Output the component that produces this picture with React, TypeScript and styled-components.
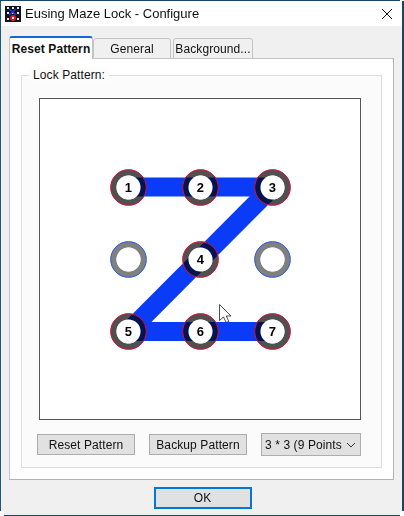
import React from 'react';
import styled, { createGlobalStyle } from 'styled-components';

const COORDS = [88.5, 160.5, 232.5];

// grid position -> number on the pattern
const ORDER: Record<number, number> = { 0: 1, 1: 2, 2: 3, 4: 4, 6: 5, 7: 6, 8: 7 };

const SEGMENTS = [
  [88.5, 187 - 99, 232.5, 187 - 99],
  [232.5, 88, 88.5, 232.5],
  [88.5, 232.5, 232.5, 232.5],
];

const PatternBoard = () => (
  <svg width="320" height="320" viewBox="0 0 320 320">
    {SEGMENTS.map(([x1, y1, x2, y2], i) => (
      <line key={i} x1={x1} y1={y1} x2={x2} y2={y2} stroke="#0a3cf8" strokeWidth="19" />
    ))}
    {COORDS.map((cy, row) =>
      COORDS.map((cx, col) => {
        const num = ORDER[row * 3 + col];
        return (
          <g key={`${row}-${col}`}>
            <circle
              cx={cx}
              cy={cy}
              r="15"
              fill="none"
              stroke={num ? '#505050' : '#808080'}
              strokeWidth="6"
              style={{ mixBlendMode: 'multiply' }}
            />
            <circle cx={cx} cy={cy} r="17.8" fill="none" stroke={num ? '#e0103a' : '#2f5cf0'} strokeWidth="1" />
            <circle cx={cx} cy={cy} r="12" fill="#fff" />
            {num ? (
              <text x={cx} y={cy + 4.5} textAnchor="middle" fontSize="13" fontWeight="700" fill="#000">
                {num}
              </text>
            ) : null}
          </g>
        );
      }),
    )}
    <path
      d="M179.5 205.5V221.5L183.5 218L186.2 223.5L188.8 222.4L186.2 217H191Z"
      fill="#fff"
      stroke="#222"
      strokeWidth="0.8"
    />
  </svg>
);

const AppIcon = () => (
  <svg width="16" height="16" viewBox="0 0 16 16">
    <rect width="16" height="16" fill="#14141c" />
    {[2, 7, 12].map((x) =>
      [1, 6].map((y) => <rect key={`${x}-${y}`} x={x} y={y} width="2" height="2" fill="#e8e8e8" />),
    )}
    <path d="M4 3l7 6M11 3L4 9" stroke="#2233dd" strokeWidth="1.6" />
    <rect x="2" y="12" width="2" height="2" fill="#e8e8e8" />
    <rect x="12" y="12" width="2" height="2" fill="#e8e8e8" />
    <circle cx="8" cy="12" r="3" fill="#e01828" />
    <rect x="7" y="11" width="2" height="2" fill="#fff" />
  </svg>
);

export default function App() {
  return (
    <>
      <GlobalStyle />
      <Window>
        <TitleBar>
          <AppIcon />
          <Title>Eusing Maze Lock - Configure</Title>
          <svg width="12" height="12" viewBox="0 0 12 12">
            <path d="M1 1l10 10M11 1L1 11" stroke="#111" strokeWidth="1" fill="none" />
          </svg>
        </TitleBar>
        <Body>
          <TabRow>
            <Tab $active $width={84}>
              Reset Pattern
            </Tab>
            <Tab $width={78}>General</Tab>
            <Tab $width={80} $gap={2}>
              Background...
            </Tab>
          </TabRow>
          <Panel>
            <GroupBox>
              <Legend>Lock Pattern:</Legend>
              <Board>
                <PatternBoard />
              </Board>
              <Controls>
                <PlainButton>Reset Pattern</PlainButton>
                <PlainButton>Backup Pattern</PlainButton>
                <SelectBox>
                  <span>3 * 3 (9 Points</span>
                  <svg width="10" height="6" viewBox="0 0 10 6">
                    <path d="M1 1l4 4 4-4" stroke="#333" strokeWidth="1" fill="none" />
                  </svg>
                </SelectBox>
              </Controls>
            </GroupBox>
          </Panel>
          <Footer>
            <OkButton>OK</OkButton>
          </Footer>
        </Body>
      </Window>
    </>
  );
}

const GlobalStyle = createGlobalStyle`
  html, body {
    margin: 0;
    padding: 0;
    background: #fff;
  }
  body {
    font-family: "Liberation Sans", Arial, sans-serif;
    font-size: 12px;
    letter-spacing: 0.1px;
    color: #111;
  }
`;

const Window = styled.div`
  position: relative;
  width: 404px;
  height: 516px;
  box-sizing: border-box;
  border-style: solid;
  border-color: #1c4468;
  border-width: 1px 2px 1px 1px;
  border-left-color: #1c5a7a;
  display: flex;
  flex-direction: column;
  overflow: hidden;

  /* the screenshot's rounded-off window corners */
  &::after {
    content: '';
    position: fixed;
    left: 0;
    top: 0;
    width: 404px;
    height: 516px;
    pointer-events: none;
    background:
      linear-gradient(#fff, #fff) right top / 4px 1px no-repeat,
      linear-gradient(#fff, #fff) left bottom / 4px 5px no-repeat,
      linear-gradient(#fff, #fff) right bottom / 4px 5px no-repeat;
  }
`;

const TitleBar = styled.div`
  height: 25px;
  flex: none;
  background: #fff;
  display: flex;
  align-items: center;
  padding: 0 9px 0 4px;
  gap: 4px;

  svg {
    flex: none;
  }
`;

const Title = styled.div`
  font-size: 13px;
  letter-spacing: 0;
  flex: 1;
`;

const Body = styled.div`
  flex: 1;
  background: #f0f0f0;
  display: flex;
  flex-direction: column;
  padding: 10px 9px 0 8px;
`;

const TabRow = styled.div`
  display: flex;
  align-items: flex-end;
  height: 23px;
  flex: none;
  position: relative;
  z-index: 1;
  margin-bottom: -1px;
`;

const Tab = styled.div<{ $active?: boolean; $width: number; $gap?: number }>`
  box-sizing: border-box;
  width: ${(p) => p.$width}px;
  height: ${(p) => (p.$active ? 23 : 21)}px;
  margin-left: ${(p) => p.$gap ?? 0}px;
  display: flex;
  align-items: center;
  justify-content: center;
  white-space: nowrap;
  overflow: hidden;
  background: ${(p) => (p.$active ? '#fff' : '#f0f0f0')};
  font-weight: ${(p) => (p.$active ? 700 : 400)};
  border: 1px solid #c4c4c4;
  border-top: ${(p) => (p.$active ? '2px solid #0a6ae0' : '1px solid #c4c4c4')};
  border-bottom: ${(p) => (p.$active ? 'none' : '1px solid #c4c4c4')};
  border-radius: 3px 3px 0 0;
`;

const Panel = styled.div`
  box-sizing: border-box;
  width: 385px;
  height: 422px;
  flex: none;
  background: #fff;
  border: 1px solid #c4c4c4;
  border-right-color: #b4b4b4;
  border-bottom-color: #b4b4b4;
  padding: 16px 11px 12px;
`;

const GroupBox = styled.div`
  position: relative;
  box-sizing: border-box;
  height: 393px;
  background: #fbfbfb;
  border: 1px solid #dcdcdc;
  padding: 22px 0 0 17px;
`;

const Legend = styled.div`
  position: absolute;
  top: -8px;
  left: 7px;
  padding: 0 4px;
  background: #fcfcfc;
  line-height: 15px;
`;

const Board = styled.div`
  box-sizing: border-box;
  width: 322px;
  height: 322px;
  background: #fff;
  border: 1px solid #555;

  svg {
    display: block;
  }
`;

const Controls = styled.div`
  width: 324px;
  display: flex;
  align-items: center;
  justify-content: space-between;
  margin: 13px 0 0 -2px;
`;

const PlainButton = styled.div`
  box-sizing: border-box;
  width: 98px;
  height: 21px;
  display: flex;
  align-items: center;
  justify-content: center;
  background: #e1e1e1;
  border: 1px solid #adadad;
  white-space: nowrap;
`;

const SelectBox = styled.div`
  box-sizing: border-box;
  width: 100px;
  height: 23px;
  display: flex;
  align-items: center;
  justify-content: space-between;
  padding: 0 4px 0 3px;
  background: #e1e1e1;
  border: 1px solid #adadad;
  white-space: nowrap;
`;

const Footer = styled.div`
  flex: 1;
  display: flex;
  justify-content: center;
  padding: 7px 0 0 3px;
`;

const OkButton = styled.div`
  box-sizing: border-box;
  width: 98px;
  height: 22px;
  display: flex;
  align-items: center;
  justify-content: center;
  background: #e1e1e1;
  border: 2px solid #0078d7;
`;
